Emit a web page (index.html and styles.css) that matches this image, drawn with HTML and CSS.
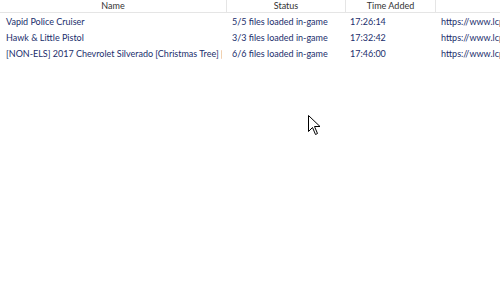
FILE: index.html
```html
<!DOCTYPE html>
<html>
<head>
<meta charset="utf-8">
<link rel="stylesheet" href="styles.css">
</head>
<body>
<div class="list">
  <div class="head">
    <div class="hc c1">Name</div>
    <div class="hc c2">Status</div>
    <div class="hc c3">Time Added</div>
    <div class="hc c4"></div>
  </div>
  <div class="rows">
    <div class="row">
      <div class="cell c1">Vapid Police Cruiser</div>
      <div class="cell c2">5/5 files loaded in-game</div>
      <div class="cell c3">17:26:14</div>
      <div class="cell c4">https://www.lcpdfr.com/downloads/</div>
    </div>
    <div class="row">
      <div class="cell c1">Hawk &amp; Little Pistol</div>
      <div class="cell c2">3/3 files loaded in-game</div>
      <div class="cell c3">17:32:42</div>
      <div class="cell c4">https://www.lcpdfr.com/downloads/</div>
    </div>
    <div class="row">
      <div class="cell c1"><span class="clip">[NON-ELS] 2017 Chevrolet Silverado [Christmas Tree] [ELS]</span></div>
      <div class="cell c2">6/6 files loaded in-game</div>
      <div class="cell c3">17:46:00</div>
      <div class="cell c4">https://www.lcpdfr.com/downloads/</div>
    </div>
  </div>
</div>
<svg class="cursor" width="13" height="21" viewBox="0 0 13 21">
  <path d="M0.5 0.5 L0.5 16.5 L4.5 12.5 L7.5 19.5 L9.5 18.5 L6.5 11.5 L12 11.5 Z" fill="#fff" stroke="#000" stroke-width="1"/>
</svg>
</body>
</html>
```
FILE: styles.css
```css
html, body {
  margin: 0;
  padding: 0;
  background: #fff;
  width: 500px;
  height: 300px;
  overflow: hidden;
  position: relative;
}
.list {
  font-family: "Lato", "Noto Sans", sans-serif;
  font-size: 9px;
  width: 500px;
}
.head {
  display: flex;
  height: 12px;
  border-bottom: 1px solid #e5e5e5;
}
.hc {
  box-sizing: border-box;
  text-align: center;
  color: #333;
  line-height: 12px;
  border-right: 1px solid #e5e5e5;
  overflow: hidden;
  white-space: nowrap;
}
.rows {
  padding-top: 1px;
}
.row {
  display: flex;
  height: 16px;
  align-items: center;
}
.cell {
  box-sizing: border-box;
  color: #1a2e6c;
  white-space: nowrap;
  overflow: hidden;
  text-overflow: clip;
  line-height: 16px;
}
.clip {
  display: block;
  width: 216px;
  overflow: hidden;
}
.c1 { flex: 0 0 227px; }
.c2 { flex: 0 0 119px; }
.c3 { flex: 0 0 90px; }
.c4 { flex: 1 1 0; min-width: 0; border-right: none; }
.cell.c1 { padding-left: 6px; }
.cell.c2 { padding-left: 5px; }
.cell.c3 { padding-left: 4px; }
.cell.c4 { padding-left: 5px; }
.cursor {
  position: absolute;
  left: 308px;
  top: 115px;
}
```
